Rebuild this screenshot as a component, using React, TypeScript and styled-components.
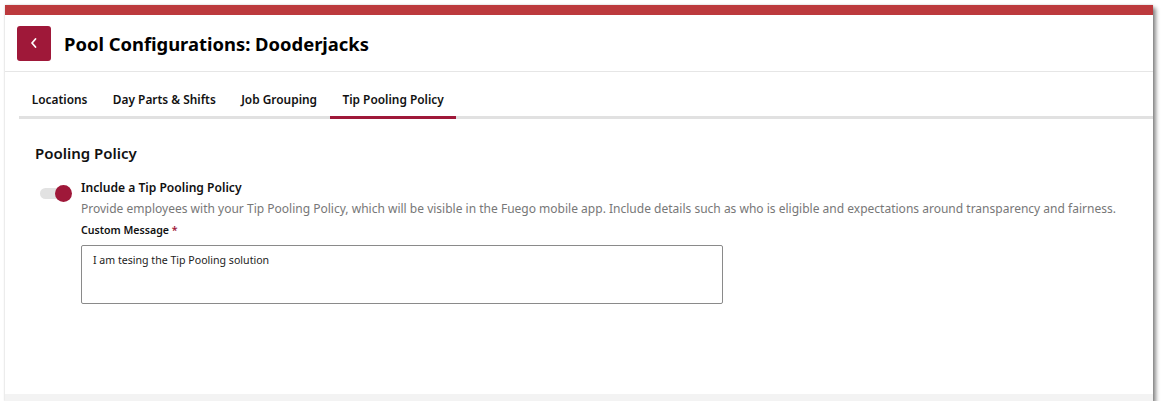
import React, { useState } from "react";
import styled, { createGlobalStyle } from "styled-components";

const GlobalStyle = createGlobalStyle`
  html, body {
    margin: 0;
    padding: 0;
    background: #ffffff;
  }
  body {
    font-family: "Noto Sans", "Open Sans", sans-serif;
    color: #1a1a1a;
  }
`;

const brand = "#9f1839";

const Frame = styled.div`
  margin: 5px 0 0 5px;
  width: 1148px;
  height: 396px;
  background: #fdfdfd;
  display: flex;
  flex-direction: column;
  box-shadow: 0 0 2px rgba(0, 0, 0, 0.18), 3px 3px 4px rgba(0, 0, 0, 0.45);
`;

const TopBar = styled.div`
  height: 10px;
  background: #bc3a3d;
  flex-shrink: 0;
`;

const Header = styled.header`
  height: 56px;
  display: flex;
  align-items: center;
  gap: 13px;
  padding-left: 12px;
  background: #ffffff;
  border-bottom: 1px solid #e6e6e6;
  box-shadow: 0 1px 1px rgba(0, 0, 0, 0.03);
`;

const BackButton = styled.button`
  width: 34px;
  height: 35px;
  border: none;
  border-radius: 3px;
  background: ${brand};
  display: flex;
  align-items: center;
  justify-content: center;
  padding: 0;
  cursor: pointer;
`;

const Title = styled.h1`
  margin: 0;
  font-size: 18.4px;
  font-weight: 700;
  color: #000;
`;

const Body = styled.div`
  flex: 1;
  display: flex;
  flex-direction: column;
  background: #ffffff;
`;

const TabBar = styled.nav`
  margin-left: 14px;
  display: flex;
  border-bottom: 3px solid #e1e1e1;
`;

const Tab = styled.button<{ $active?: boolean }>`
  border: none;
  background: none;
  font-family: inherit;
  font-size: 11.9px;
  font-weight: 600;
  color: #111;
  padding: 18px 12.7px 7px;
  line-height: 19px;
  margin-bottom: -3px;
  border-bottom: 3px solid ${(p) => (p.$active ? brand : "transparent")};
  cursor: pointer;
`;

const Content = styled.section`
  flex: 1;
  padding: 23px 0 0 30px;
`;

const SectionTitle = styled.h2`
  margin: 0;
  font-size: 15px;
  font-weight: 600;
  line-height: 22px;
  color: #111;
`;

const PolicyRow = styled.div`
  display: grid;
  grid-template-columns: 46px 1fr;
  margin-top: 15px;
`;

const ToggleCell = styled.div`
  padding-top: 3px;
  padding-left: 5px;
`;

const Track = styled.button<{ $on: boolean }>`
  position: relative;
  width: 28px;
  height: 11px;
  border: none;
  border-radius: 6px;
  background: #e2e2e2;
  padding: 0;
  cursor: pointer;
  margin-top: 2px;
`;

const Thumb = styled.span<{ $on: boolean }>`
  position: absolute;
  top: -3px;
  left: ${(p) => (p.$on ? "15px" : "-2px")};
  width: 17px;
  height: 17px;
  border-radius: 50%;
  background: ${(p) => (p.$on ? brand : "#fafafa")};
`;

const PolicyText = styled.div`
  display: flex;
  flex-direction: column;
`;

const PolicyLabel = styled.div`
  font-size: 12.1px;
  font-weight: 600;
  line-height: 18px;
  color: #111;
`;

const Description = styled.div`
  margin-top: 2px;
  font-size: 12.03px;
  line-height: 20px;
  color: #777;
  white-space: nowrap;
`;

const FieldLabel = styled.label`
  margin-top: 3px;
  font-size: 10.6px;
  font-weight: 600;
  line-height: 16px;
  color: #111;

  span {
    color: ${brand};
  }
`;

const MessageBox = styled.textarea`
  margin-top: 7px;
  width: 642px;
  height: 59px;
  box-sizing: border-box;
  border: 1px solid #8a8a8a;
  border-radius: 2px;
  padding: 6px 11px;
  font-family: inherit;
  font-size: 10.6px;
  line-height: 16px;
  color: #222;
  resize: none;
  outline: none;
`;

const Footer = styled.div`
  height: 7px;
  background: #f3f3f3;
`;

const tabs = ["Locations", "Day Parts & Shifts", "Job Grouping", "Tip Pooling Policy"];

const App = () => {
  const [active, setActive] = useState("Tip Pooling Policy");
  const [enabled, setEnabled] = useState(true);
  const [message, setMessage] = useState("I am tesing the Tip Pooling solution");

  return (
    <>
      <GlobalStyle />
      <Frame>
        <TopBar />
        <Header>
          <BackButton aria-label="Back">
            <svg width="10" height="12" viewBox="0 0 10 12">
              <path d="M6.5 2 L3 6 L6.5 10" fill="none" stroke="#fff" strokeWidth="1.8" strokeLinecap="round" strokeLinejoin="round" />
            </svg>
          </BackButton>
          <Title>Pool Configurations: Dooderjacks</Title>
        </Header>
        <Body>
          <TabBar>
            {tabs.map((t) => (
              <Tab key={t} $active={t === active} onClick={() => setActive(t)}>
                {t}
              </Tab>
            ))}
          </TabBar>
          <Content>
            <SectionTitle>Pooling Policy</SectionTitle>
            <PolicyRow>
              <ToggleCell>
                <Track $on={enabled} onClick={() => setEnabled(!enabled)} aria-label="Include a Tip Pooling Policy">
                  <Thumb $on={enabled} />
                </Track>
              </ToggleCell>
              <PolicyText>
                <PolicyLabel>Include a Tip Pooling Policy</PolicyLabel>
                <Description>
                  Provide employees with your Tip Pooling Policy, which will be visible in the Fuego mobile app. Include details such as who is eligible and expectations around transparency and fairness.
                </Description>
                <FieldLabel>
                  Custom Message <span>*</span>
                </FieldLabel>
                <MessageBox value={message} onChange={(e) => setMessage(e.target.value)} />
              </PolicyText>
            </PolicyRow>
          </Content>
          <Footer />
        </Body>
      </Frame>
    </>
  );
};

export default App;
